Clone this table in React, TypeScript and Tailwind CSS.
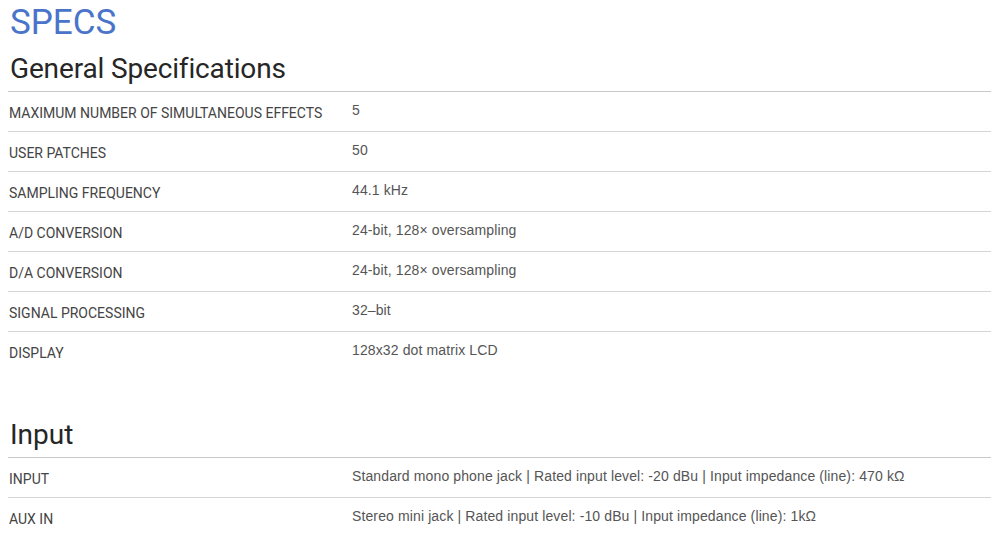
import React from "react";

type SpecRow = {
  label: string;
  value: string;
};

const general: SpecRow[] = [
  { label: "MAXIMUM NUMBER OF SIMULTANEOUS EFFECTS", value: "5" },
  { label: "USER PATCHES", value: "50" },
  { label: "SAMPLING FREQUENCY", value: "44.1 kHz" },
  { label: "A/D CONVERSION", value: "24-bit, 128× oversampling" },
  { label: "D/A CONVERSION", value: "24-bit, 128× oversampling" },
  { label: "SIGNAL PROCESSING", value: "32–bit" },
  { label: "DISPLAY", value: "128x32 dot matrix LCD" },
];

const input: SpecRow[] = [
  {
    label: "INPUT",
    value:
      "Standard mono phone jack | Rated input level: -20 dBu | Input impedance (line): 470 kΩ",
  },
  {
    label: "AUX IN",
    value: "Stereo mini jack | Rated input level: -10 dBu | Input impedance (line): 1kΩ",
  },
];

const SpecTable: React.FC<{ rows: SpecRow[] }> = ({ rows }) => (
  <div className="border-t border-[#c8c8c8]">
    {rows.map((row, i) => (
      <div
        key={row.label}
        className={`grid grid-cols-[344px_1fr] h-10 items-center ${
          i < rows.length - 1 ? "border-b border-[#d4d4d4]" : ""
        }`}
      >
        <div className="pl-px pt-[3px] font-['Roboto',sans-serif] text-[14px] text-[#444]">
          {row.label}
        </div>
        <div className="font-['Liberation_Sans',Arial,sans-serif] text-[14px] tracking-[0.12px] text-[#555] pb-[3px]">
          {row.value}
        </div>
      </div>
    ))}
  </div>
);

const App: React.FC = () => {
  return (
    <div className="w-[1000px] h-[545px] bg-white pl-2 pr-[9px] overflow-hidden">
      <h1 className="font-['Roboto',sans-serif] text-[35px] leading-[40px] text-[#4a74c9] pl-0.5 pt-[3px]">
        SPECS
      </h1>
      <h2 className="font-['Roboto',sans-serif] text-[28px] tracking-[-0.15px] leading-[32px] text-[#262626] pl-0.5 mt-[10px] mb-[6px]">
        General Specifications
      </h2>
      <SpecTable rows={general} />
      <h2 className="font-['Roboto',sans-serif] text-[28px] leading-[32px] text-[#262626] pl-0.5 mt-[47px] mb-[6px]">
        Input
      </h2>
      <SpecTable rows={input} />
    </div>
  );
};

export default App;
